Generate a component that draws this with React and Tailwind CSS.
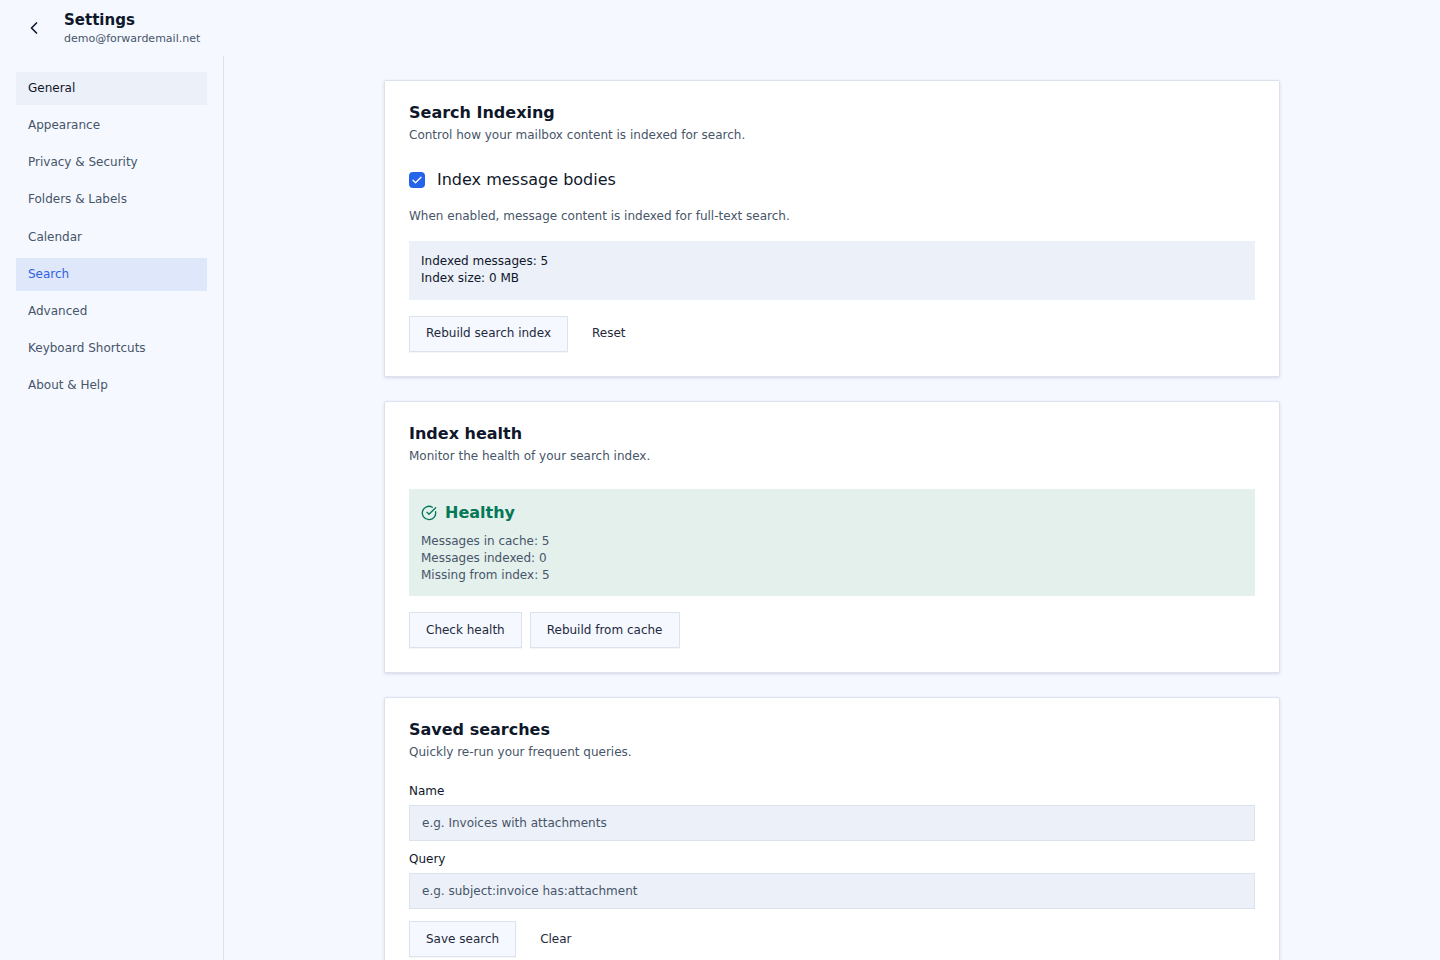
import { ChevronLeft, CircleCheckBig } from 'lucide-react';

const NAV = ['General', 'Appearance', 'Privacy & Security', 'Folders & Labels', 'Calendar', 'Search', 'Advanced', 'Keyboard Shortcuts', 'About & Help'];

function NavItem({ label }) {
    const cls = label === 'General'
        ? 'bg-[#ecf0f8] text-[#0f172a]'
        : label === 'Search'
            ? 'bg-[#dfe7fb] text-[#2f62e0]'
            : 'text-[#475569]';
    return <div className={`px-3 pt-[6.8px] pb-[8.4px] text-[12px] leading-[18px] ${cls}`}>{label}</div>;
}

function Card({ title, desc, children }) {
    return (
        <section className="bg-white border border-[#dde3ee] rounded-[2px] shadow-[0_1px_3px_rgba(15,23,42,0.14)] px-6 pt-[20px] pb-6">
            <h2 className="text-[16px] leading-[24px] font-bold text-[#0f172a]">{title}</h2>
            <p className="text-[12px] leading-[18px] text-[#475569] mt-[1px]">{desc}</p>
            {children}
        </section>
    );
}

function Btn({ children, className = '' }) {
    return (
        <button className={`h-9 px-4 border border-[#dde3ee] bg-[#f5f8ff] text-[12px] text-[#1e293b] shadow-[0_1px_1px_rgba(15,23,42,0.04)] ${className}`}>
            {children}
        </button>
    );
}

function Field({ label, placeholder }) {
    return (
        <div>
            <div className="text-[12px] leading-[18px] text-[#0f172a] mb-[5px]">{label}</div>
            <div className="h-9 flex items-center px-3 bg-[#ecf0f8] border border-[#dde3ee] text-[12px] text-[#475569]">{placeholder}</div>
        </div>
    );
}

export default function App() {
    return (
        <div className="h-screen overflow-hidden flex flex-col bg-[#f5f8ff] font-['DejaVu_Sans',sans-serif]">
            <header className="h-14 flex-shrink-0 flex items-center pl-6">
                <ChevronLeft size={20} strokeWidth={2} className="text-[#0f172a] w-5" />
                <div className="ml-5">
                    <div className="text-[15px] leading-[19px] font-bold text-[#0f172a] pt-[1px]">Settings</div>
                    <div className="text-[11px] leading-[17px] text-[#475569]">demo@forwardemail.net</div>
                </div>
            </header>
            <div className="flex flex-1 min-h-0">
                <aside className="w-[224px] flex-shrink-0 border-r border-[#dde3ee] pt-4 pl-4 pr-4">
                    <nav className="flex flex-col gap-1">
                        {NAV.map(label => <NavItem key={label} label={label} />)}
                    </nav>
                </aside>
                <main className="flex-1 min-w-0 overflow-hidden pt-6">
                    <div className="w-[896px] mx-auto flex flex-col gap-6">
                        <Card title="Search Indexing" desc="Control how your mailbox content is indexed for search.">
                            <label className="flex items-center gap-3 mt-6">
                                <span className="w-4 h-4 rounded-[4px] bg-[#2563eb] flex items-center justify-center">
                                    <svg width="12" height="12" viewBox="0 0 24 24" fill="none" stroke="white" strokeWidth="2.5" strokeLinecap="round" strokeLinejoin="round"><path d="M4 12.5l5 5L20 6.5" /></svg>
                                </span>
                                <span className="text-[16px] leading-[24px] text-[#0f172a]">Index message bodies</span>
                            </label>
                            <p className="text-[12px] leading-[18px] text-[#475569] mt-[15px]">When enabled, message content is indexed for full-text search.</p>
                            <div className="mt-4 bg-[#ecf0f8] px-3 pt-3 pb-[13px] text-[12px] leading-[17px] text-[#0f172a]">
                                <div>Indexed messages: 5</div>
                                <div>Index size: 0 MB</div>
                            </div>
                            <div className="flex items-center gap-2 mt-4">
                                <Btn className="pb-[2px]">Rebuild search index</Btn>
                                <button className="h-9 px-4 pb-[2px] text-[12px] text-[#1e293b]">Reset</button>
                            </div>
                        </Card>

                        <Card title="Index health" desc="Monitor the health of your search index.">
                            <div className="mt-6 bg-[#e3f0ec] px-3 pt-3 pb-3">
                                <div className="flex items-center gap-2">
                                    <CircleCheckBig size={16} strokeWidth={2} className="text-[#047857]" />
                                    <span className="text-[16px] leading-[24px] font-bold text-[#047857]">Healthy</span>
                                </div>
                                <div className="mt-2 text-[12px] leading-[17px] text-[#475569]">
                                    <div>Messages in cache: 5</div>
                                    <div>Messages indexed: 0</div>
                                    <div>Missing from index: 5</div>
                                </div>
                            </div>
                            <div className="flex items-center gap-2 mt-4">
                                <Btn>Check health</Btn>
                                <Btn>Rebuild from cache</Btn>
                            </div>
                        </Card>

                        <Card title="Saved searches" desc="Quickly re-run your frequent queries.">
                            <div className="mt-[21px] flex flex-col gap-[9px]">
                                <Field label="Name" placeholder="e.g. Invoices with attachments" />
                                <Field label="Query" placeholder="e.g. subject:invoice has:attachment" />
                            </div>
                            <div className="flex items-center gap-2 mt-3">
                                <Btn>Save search</Btn>
                                <button className="h-9 px-4 text-[12px] text-[#1e293b]">Clear</button>
                            </div>
                        </Card>
                    </div>
                </main>
            </div>
        </div>
    );
}
